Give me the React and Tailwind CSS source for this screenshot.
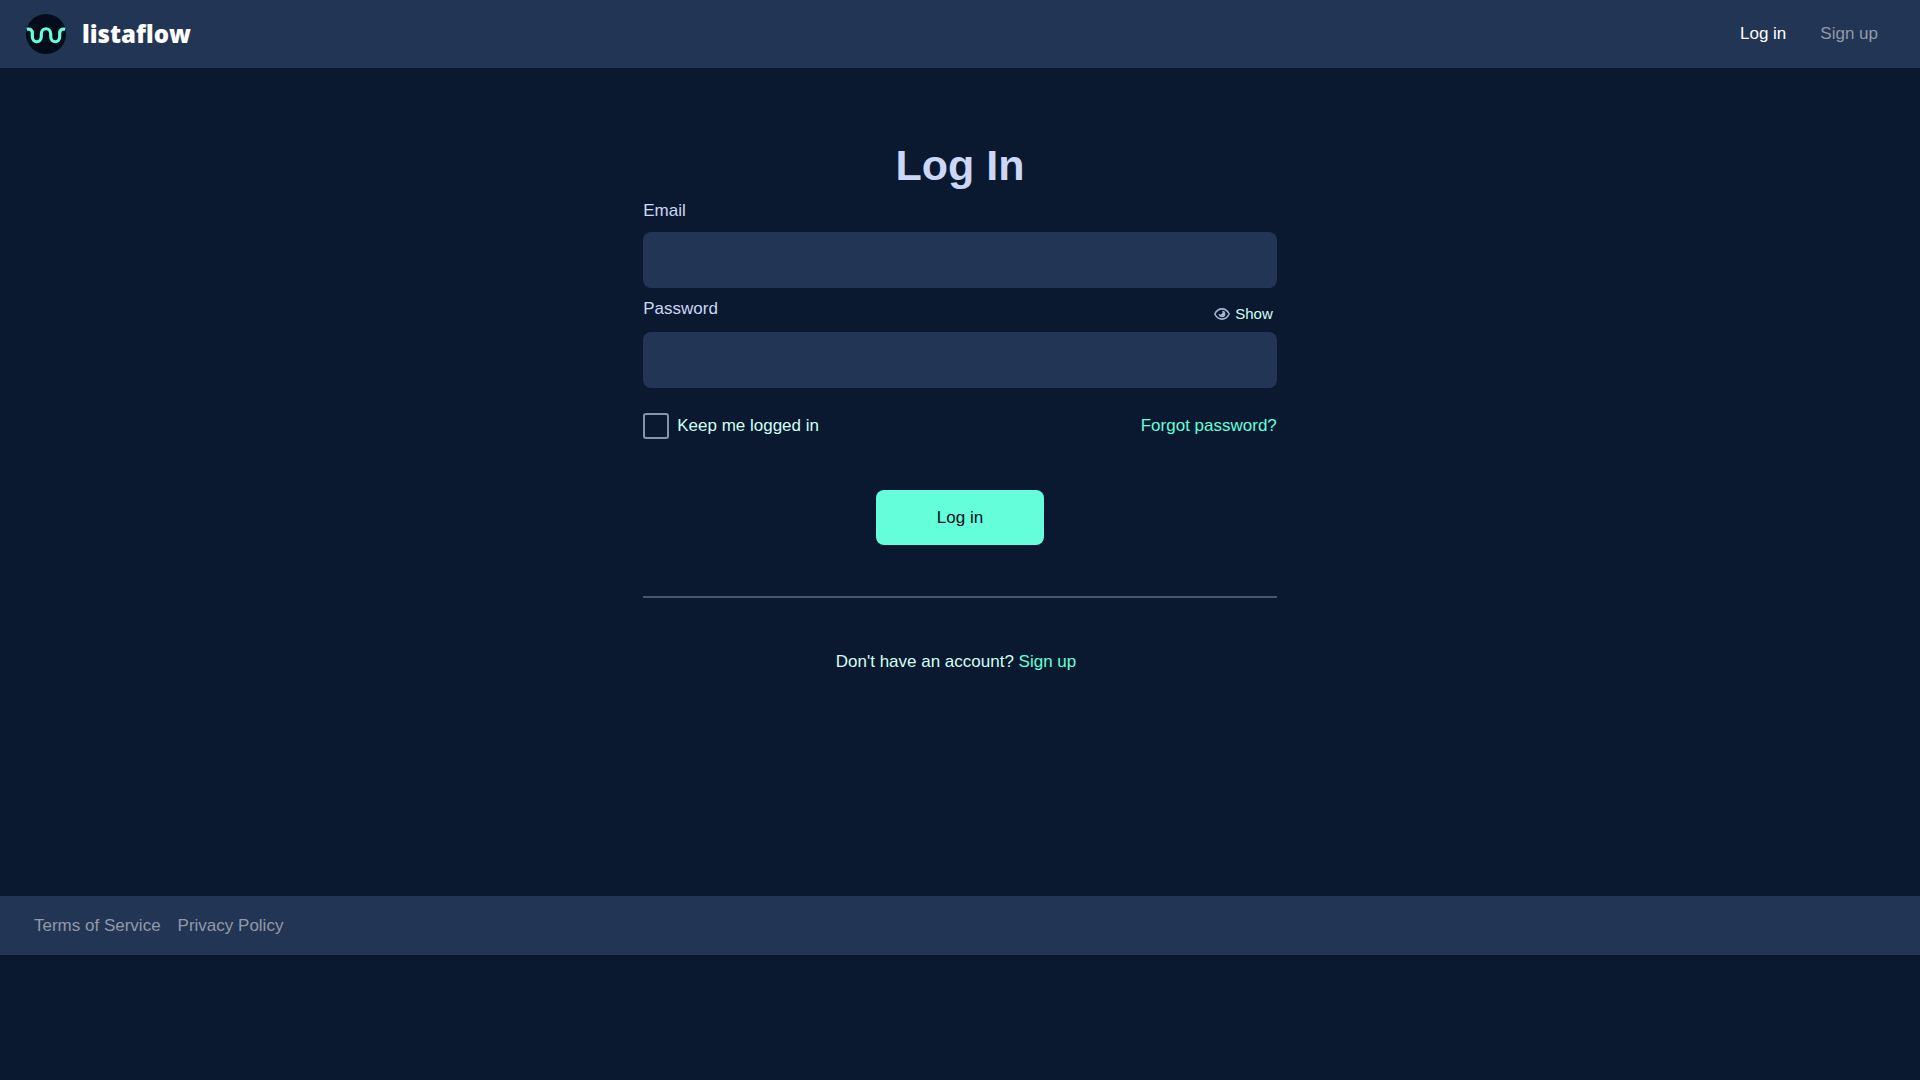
import React, { useState } from 'react'

function Logo() {
  return (
    <a href="#" aria-label="listaflow" className="flex items-center gap-4">
      <svg width="40" height="40" viewBox="0 0 40 40" fill="none" aria-hidden="true">
        <circle cx="20" cy="20" r="20" fill="#020c1b" />
        <path
          d="M.8 15.300C4.500 14.500 6.300 16 6.300 19.500V22.500C6.300 29.500 15.300 29.500 15.300 22.500V20C15.300 13 24.700 13 24.700 20V22.500C24.700 29.500 33.700 29.500 33.700 22.500V19.500C33.700 16 35.500 14.500 39.200 15.300"
          stroke="#64ffda"
          strokeWidth="3.200"
        />
      </svg>
      <span className="font-['Open_Sans',sans-serif] text-2xl font-extrabold text-white">listaflow</span>
    </a>
  )
}

function Header() {
  return (
    <header className="flex h-[68px] items-center justify-between bg-[#233554] pr-[42px] pl-[26px]">
      <Logo />
      <nav className="flex gap-[34px]">
        <a href="#" className="text-white">Log in</a>
        <a href="#" className="text-[#919aa9]">Sign up</a>
      </nav>
    </header>
  )
}

function EyeIcon() {
  return (
    <svg width="16" height="12" viewBox="0 0 16 12" fill="none" aria-hidden="true">
      <path d="M.8 6C2.500 2.600 5 .900 8 .900S13.500 2.600 15.200 6C13.500 9.400 11 11.100 8 11.100S2.500 9.400.8 6Z" stroke="#a8b2d1" strokeWidth="1.600" />
      <path d="M8 2.700A3.300 3.300 0 1 1 4.800 5.600A1.800 1.800 0 0 0 8 2.700Z" fill="#a8b2d1" />
    </svg>
  )
}

function LoginForm() {
  const [showPassword, setShowPassword] = useState(false)

  return (
    <form onSubmit={(e) => e.preventDefault()} className="mx-auto w-[33%] min-w-80">
      <h1 className="text-center text-[43px] leading-[50px] font-bold text-[#ccd6f6]">Log In</h1>

      <label htmlFor="email" className="mt-2 block text-[#ccd6f6]">Email</label>
      <input id="email" type="email" className="mt-2 block h-14 w-full rounded-lg bg-[#233554] px-4 text-[#ccd6f6]" />

      <div className="mt-2 flex justify-between">
        <label htmlFor="password" className="text-[#ccd6f6]">Password</label>
        <button
          type="button"
          onClick={() => setShowPassword(!showPassword)}
          className="mt-2 mr-1 flex items-center gap-[5px] text-[15px] leading-5 text-[#d1fff4]"
        >
          <EyeIcon />
          {showPassword ? 'Hide' : 'Show'}
        </button>
      </div>
      <input
        id="password"
        type={showPassword ? 'text' : 'password'}
        className="mt-2 block h-14 w-full rounded-lg bg-[#233554] px-4 text-[#ccd6f6]"
      />

      <div className="mt-[25px] flex items-center justify-between">
        <label className="flex items-center gap-2 text-[#d1fff4]">
          <input type="checkbox" className="size-[26px] appearance-none rounded-[3px] border-2 border-[#8892b0] checked:bg-[#64ffda]" />
          Keep me logged in
        </label>
        <a href="#" className="text-[#64ffda]">Forgot password?</a>
      </div>

      <button type="submit" className="mx-auto mt-[51px] block h-[55px] w-[168px] rounded-lg bg-[#64ffda] text-[#020c1b]">
        Log in
      </button>

      <hr className="mt-[51px] border-t-2 border-[#495670]" />

      <p className="mt-[51px] pr-2 text-center text-[#d1fff4]">
        Don't have an account? <a href="#" className="text-[#64ffda]">Sign up</a>
      </p>
    </form>
  )
}

function Footer() {
  return (
    <footer className="flex h-[59px] items-center gap-[17px] bg-[#233554] px-[34px] text-[#919aa9]">
      <a href="#">Terms of Service</a>
      <a href="#">Privacy Policy</a>
    </footer>
  )
}

export default function App() {
  return (
    <div className="min-h-screen bg-[#0a192f] font-['Liberation_Sans',Arial,sans-serif] text-[17px] leading-[26px]">
      <Header />
      <main className="pt-[72px] pb-[221px]">
        <LoginForm />
      </main>
      <Footer />
    </div>
  )
}
